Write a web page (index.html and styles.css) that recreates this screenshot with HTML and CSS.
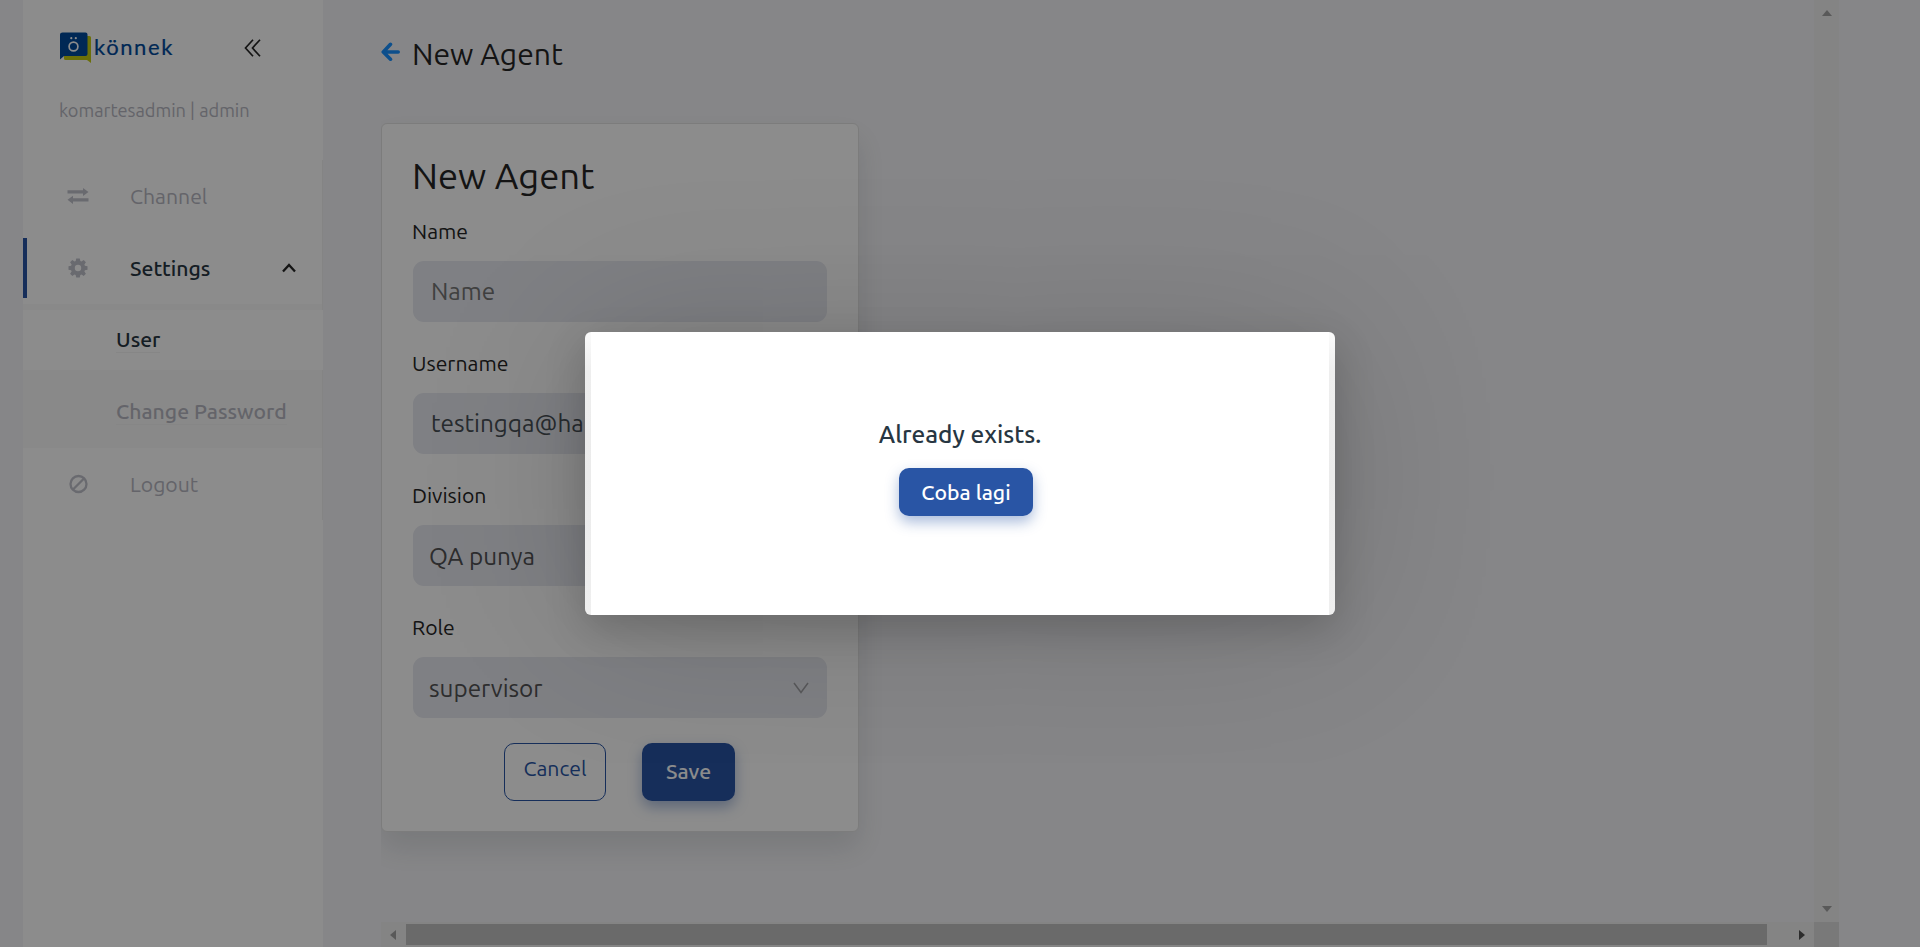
FILE: index.html
```html
<!DOCTYPE html>
<html lang="id">
<head>
<meta charset="utf-8">
<title>New Agent</title>
<link rel="stylesheet" href="styles.css">
</head>
<body>
<div class="app">
  <aside class="sidebar">
    <div class="brand">
      <svg class="brand-mark" width="32" height="32" viewBox="0 0 32 32">
        <path d="M4 4h25.500q1.500 0 1.500 1.500V31l-4-3H5.500Q4 28 4 26.500z" fill="#c4cb12"/>
        <path d="M2.500 .5h23q2 0 2 2v19.500q0 2-2 2H4L0 27.500V2.500Q0 .5 2.500 .5z" fill="#004a9b"/>
        <circle cx="13.500" cy="14.500" r="4.400" fill="none" stroke="#fff" stroke-width="1.700"/>
        <circle cx="11.300" cy="6.200" r="1.100" fill="#fff"/><circle cx="15.800" cy="6.200" r="1.100" fill="#fff"/>
      </svg>
      <span class="brand-name">könnek</span>
      <svg class="collapse" width="18" height="18" viewBox="0 0 18 18" fill="none" stroke="#262626" stroke-width="1.700"><path d="M9 .7 1.500 9 9 17.300M16 .7 8.500 9l7.500 8.300"/></svg>
    </div>
    <p class="account">komartesadmin | admin</p>
    <nav class="menu">
      <a class="item">
        <svg class="icon" width="22" height="16" viewBox="0 0 22 16" fill="#c0c1cb"><path d="M.5 2.300H16V0l5.500 4L16 8V5.400H.5zM21.500 13.400H6V16L.5 11.800l5.500-4v2.500h15.500z"/></svg>
        <span>Channel</span>
      </a>
      <a class="item active">
        <svg class="icon" width="20" height="20" viewBox="-10 -10 20 20" fill="#c0c1cb"><path fill-rule="evenodd" d="M-1.800-9.500h3.600l.5 2.600 1.200.5 2.200-1.500 2.200 2.200-1.500 2.200.5 1.200 2.600.5v3.600l-2.600.5-.5 1.200 1.500 2.200-2.200 2.200-2.200-1.500-1.200.5-.5 2.600h-3.600l-.5-2.600-1.200-.5-2.200 1.500-2.200-2.200 1.500-2.200-.5-1.200-2.600-.5v-3.600l2.600-.5.5-1.200-1.500-2.200 2.200-2.200 2.200 1.500 1.200-.5zM3.200 0a3.200 3.200 0 1 0-6.400 0a3.200 3.200 0 1 0 6.400 0z"/></svg>
        <span>Settings</span>
        <svg class="caret" width="14" height="10" viewBox="0 0 14 10" fill="none" stroke="#262626" stroke-width="2.300"><path d="m1 8.500 6-6.500 6 6.500"/></svg>
      </a>
      <div class="submenu">
        <a class="sub selected"><span>User</span></a>
        <a class="sub"><span>Change Password</span></a>
      </div>
      <a class="item last">
        <svg class="icon" width="20" height="20" viewBox="0 0 20 20" fill="none" stroke="#c0c1cb" stroke-width="2.300"><circle cx="10.500" cy="10" r="8"/><path d="m5 15.500 11-11"/></svg>
        <span>Logout</span>
      </a>
    </nav>
  </aside>
  <main class="main">
    <div class="view">
      <header class="page-head">
        <svg width="20" height="20" viewBox="0 0 20 20" fill="none" stroke="#1890ff" stroke-width="3.600" stroke-linecap="round" stroke-linejoin="round"><path d="M9.500 2.300 2.300 10l7.200 7.200M2.500 10h14.700"/></svg>
        <h1 class="page-title">New Agent</h1>
      </header>
      <section class="card">
        <h2 class="card-title">New Agent</h2>
        <div class="field"><label class="label">Name</label><div class="input placeholder">Name</div></div>
        <div class="field"><label class="label">Username</label><div class="input">testingqa@ha</div></div>
        <div class="field"><label class="label">Division</label><div class="input select">QA punya</div></div>
        <div class="field"><label class="label">Role</label><div class="input select">supervisor
          <svg class="arrow" width="16" height="12" viewBox="0 0 16 12" fill="none" stroke="#a0a0a4" stroke-width="1.500"><path d="m1 1 7 9.500L15 1"/></svg></div></div>
        <div class="actions"><span class="btn cancel">Cancel</span><span class="btn primary save">Save</span></div>
      </section>
    </div>
    <div class="hbar"><i class="tri left"></i><span class="thumb"></span><i class="tri right"></i></div>
  </main>
  <div class="vbar"><i class="tri up"></i><i class="tri down"></i><span class="corner"></span></div>
</div>
<div class="overlay">
  <div class="modal">
    <div class="modal-body">
      <p class="message">Already exists.</p>
      <span class="btn primary retry">Coba lagi</span>
    </div>
  </div>
</div>
</body>
</html>
```
FILE: styles.css
```css
* { box-sizing: border-box; }
body { margin: 0; height: 947px; overflow: hidden; background: #f5f5f8; font-family: Ubuntu, "Noto Sans", sans-serif; color: #262626; white-space: nowrap; }
h1, h2, p { margin: 0; font-weight: 400; }
.app { display: flex; height: 947px; padding-left: 23px; }
.sidebar { width: 300px; background: #fff; }
.brand { display: flex; height: 96px; padding: 32px 0 0 37px; }
.brand-mark { flex: none; }
.brand-name { width: 152px; padding-left: 2px; font: 400 22px/30px Lato, sans-serif; letter-spacing: 1.600px; -webkit-text-stroke: .2px #004a9b; color: #004a9b; }
.collapse { margin-top: 7px; }
.account { height: 64px; padding-left: 36px; font-size: 18.200px; line-height: 29px; color: #b6b7c1; }
.menu { height: 360px; padding-top: 6px; border-right: 1px solid #f0f0f0; }
.item { display: flex; align-items: center; height: 60px; padding-left: 44px; font-size: 21.200px; color: #b6b7c1; }
.item .icon { flex: none; margin-right: auto; }
.item span { flex: none; width: 192px; }
.item.active { position: relative; margin-top: 12px; border-left: 4px solid #2955a5; padding-left: 41px; color: #273642; font-weight: 500; }
.caret { position: absolute; left: 255px; top: 25px; }
.submenu { height: 144px; margin-top: 6px; padding-top: 6px; background: #fafafa; }
.sub { display: block; height: 60px; padding-left: 93px; font-size: 21.200px; line-height: 58px; font-weight: 500; color: #b6b7c1; }
.sub span { padding-bottom: 1px; border-bottom: 1px solid #f4f4f4; }
.sub + .sub { margin-top: 12px; }
.sub.selected { background: #fff; color: #273642; margin-right: -1px; }
.item.last { margin-top: 6px; padding-left: 45px; }
.main { display: flex; flex-direction: column; width: 1433px; margin-left: 58px; }
.view { height: 922px; overflow: hidden; }
.page-head { display: flex; height: 123px; padding-top: 34px; }
.page-head svg { margin-top: 8px; }
.page-title { margin-left: 11px; font-size: 30.100px; line-height: 40px; }
.card { width: 478px; height: 709px; padding: 27px 31px; border: 1px solid #e2e2e2; border-radius: 6px; background: #fff; box-shadow: 0 16px 30px rgba(60,70,80,.14); }
.card-title { font-size: 36.400px; line-height: 50px; height: 67px; text-indent: -1px; }
.field { height: 132px; }
.label { display: block; height: 43px; font-size: 21.200px; line-height: 26px; text-indent: -1px; }
.input { position: relative; height: 61px; padding-left: 18px; border-radius: 11px; background: #e7e9f0; font-size: 24.300px; line-height: 60px; color: #495057; }
.input.placeholder { color: #757575; }
.input.select { padding-left: 16px; color: #525254; line-height: 62px; }
.arrow { position: absolute; right: 18px; top: 25px; }
.actions { display: flex; gap: 36px; padding-left: 91px; margin-top: -3px; }
.btn { display: block; border-radius: 10px; text-align: center; font-size: 21.200px; }
.cancel { width: 102px; height: 58px; border: 1px solid #2955a5; color: #2955a5; line-height: 49px; }
.primary { background: #2955a5; color: #fff; font-weight: 500; box-shadow: 0 6px 14px rgba(41,85,165,.4); }
.save { width: 93px; height: 58px; line-height: 56px; }
.hbar { display: flex; align-items: center; justify-content: space-between; height: 25px; padding: 0 9px; background: #f1f1f1; }
.thumb { width: 1361px; height: 21px; margin-right: 23px; background: #c1c1c1; }
.tri { width: 0; height: 0; border: 5.500px solid transparent; flex: none; }
.tri.left { border-left: 0; border-right: 6px solid #a3a3a3; }
.tri.right { border-right: 0; border-left: 6px solid #505050; }
.vbar { display: flex; flex-direction: column; align-items: center; width: 25px; padding-top: 10px; background: #f0f0f0; }
.tri.up { border-top: 0; border-bottom: 6px solid #a3a3a3; }
.tri.down { border-bottom: 0; border-top: 6px solid #a3a3a3; margin-top: auto; }
.corner { width: 25px; height: 25px; margin-top: 10px; background: #dcdcdc; }
.overlay { position: absolute; inset: 0; display: flex; justify-content: center; align-items: flex-start; padding-top: 332px; background: rgba(0,0,0,.45); overflow: hidden; }
.modal { width: 750px; height: 283px; padding: 0 6px; border-radius: 6px; background: linear-gradient(#fbfbfb, #eee 14%, #ebebeb 50%, #efefef); box-shadow: 0 14px 40px rgba(0,0,0,.18), 0 4px 170px rgba(0,0,0,.16); }
.modal-body { display: flex; flex-direction: column; align-items: center; height: 283px; padding-top: 84px; background: #fff; }
.message { height: 52px; font-size: 24.400px; line-height: 36px; font-weight: 500; color: #273642; }
.retry { width: 134px; height: 48px; line-height: 48px; margin-left: 12px; }
```
